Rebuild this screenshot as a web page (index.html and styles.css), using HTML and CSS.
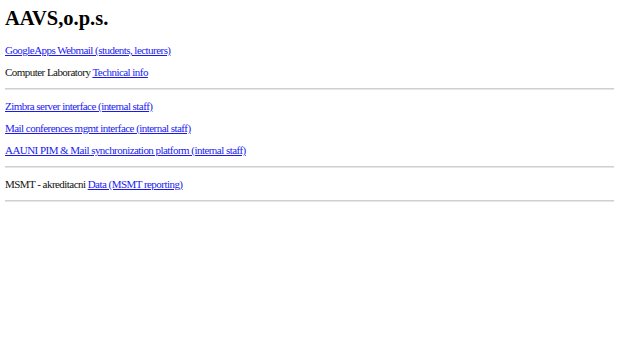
FILE: index.html
```html
<!DOCTYPE html>
<html lang="cs">
<head>
    <meta charset="UTF-8">
    <title>AAVS,o.p.s.</title>
    <link rel="stylesheet" href="styles.css">
</head>
<body>
    <h1>AAVS,o.p.s.</h1>

    <p><a href="#">GoogleApps Webmail (students, lecturers)</a></p>
    <p>Computer Laboratory <a href="#">Technical info</a></p>

    <hr>

    <p><a href="#">Zimbra server interface (internal staff)</a></p>
    <p><a href="#">Mail conferences mgmt interface (internal staff)</a></p>
    <p><a href="#">AAUNI PIM &amp; Mail synchronization platform (internal staff)</a></p>

    <hr>

    <p>MSMT - akreditacni <a href="#">Data (MSMT reporting)</a></p>

    <hr>
</body>
</html>
```

FILE: styles.css
```css
body {
    margin: 5px 6px 5px 5px;
    font-family: 'Liberation Serif', 'Times New Roman', serif;
    font-size: 11px;
    letter-spacing: -0.54px;
    color: #111;
    background: #fff;
}

h1 {
    font-size: 20.5px;
    line-height: 25px;
    letter-spacing: 0;
    margin: 1px 0 13px 0;
    color: #000;
}

p {
    margin: 10px 0;
    line-height: 12px;
}

a {
    color: #1a1aee;
}

hr {
    margin: 5px 0;
    height: 0;
    border: none;
    border-top: 1px solid #cfcfcf;
    border-bottom: 1px solid #e6e6e6;
}
```
